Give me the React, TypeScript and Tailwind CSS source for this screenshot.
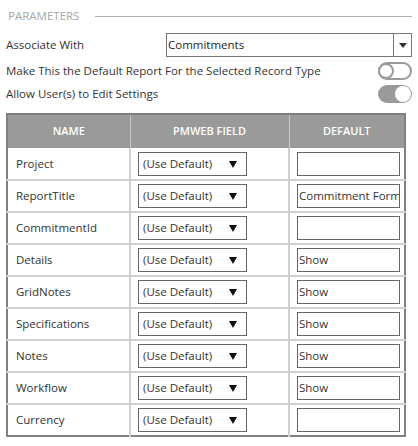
import React from "react";

const rows = [
  { name: "Project", value: "" },
  { name: "ReportTitle", value: "Commitment Form" },
  { name: "CommitmentId", value: "" },
  { name: "Details", value: "Show" },
  { name: "GridNotes", value: "Show" },
  { name: "Specifications", value: "Show" },
  { name: "Notes", value: "Show" },
  { name: "Workflow", value: "Show" },
  { name: "Currency", value: "" },
];

const Toggle = ({ on }: { on: boolean }) =>
  on ? (
    <div className="flex h-[18px] w-[34px] items-center justify-end rounded-full bg-[#9a9a9a] pr-[1px]">
      <div className="h-[16px] w-[16px] rounded-full bg-white" />
    </div>
  ) : (
    <div className="flex h-[18px] w-[34px] items-center rounded-full border-2 border-[#9a9a9a] bg-white">
      <div className="h-[16px] w-[16px] rounded-full border-2 border-[#9a9a9a] bg-white -ml-[2px]" />
    </div>
  );

export default function App() {
  return (
    <div className="h-[446px] w-[418px] bg-white font-['Open_Sans',sans-serif] text-[11.5px] text-[#333]">
      <div className="px-[6px] pt-[8px]">
        <div className="flex items-center gap-[16px] pl-[2px]">
          <span className="text-[11.5px] leading-[16px] text-[#a8a8a8]">PARAMETERS</span>
          <div className="mt-[1px] h-px flex-1 bg-[#b0b0b0]" />
        </div>

        <div className="mt-[9px] flex h-[24px] items-center">
          <span className="w-[160px]">Associate With</span>
          <div className="flex h-[24px] flex-1 items-center border border-[#777]">
            <span className="flex-1 pl-[1px] text-[#222]">Commitments</span>
            <div className="flex h-full w-[18px] items-center justify-center border-l border-[#777]">
              <svg width="8" height="5" viewBox="0 0 8 5">
                <path d="M0 0h8L4 5z" fill="#333" />
              </svg>
            </div>
          </div>
        </div>

        <div className="mt-[5px] flex h-[18px] items-center justify-between">
          <span>Make This the Default Report For the Selected Record Type</span>
          <Toggle on={false} />
        </div>
        <div className="mt-[5px] flex h-[18px] items-center justify-between">
          <span>Allow User(s) to Edit Settings</span>
          <Toggle on={true} />
        </div>

        <table className="mt-[10px] w-[400px] border-collapse border-2 border-[#808080]">
          <thead>
            <tr className="h-[34px] bg-[#9a9a9a] text-[11px] font-semibold text-white">
              <th className="w-[123px] border-r border-[#c8c8c8] font-semibold">NAME</th>
              <th className="w-[159px] border-r border-[#c8c8c8] font-semibold">PMWEB FIELD</th>
              <th className="font-semibold">DEFAULT</th>
            </tr>
          </thead>
          <tbody>
            {rows.map((r) => (
              <tr key={r.name} className="h-[32px] border-b-2 border-[#d0d0d0] last:border-b-0">
                <td className="border-r-2 border-[#d0d0d0] pl-[8px]">{r.name}</td>
                <td className="border-r-2 border-[#d0d0d0] pl-[7px]">
                  <div className="flex h-[24px] w-[109px] items-center justify-between border border-[#666] pl-[4px] pr-[9px]">
                    <span>(Use Default)</span>
                    <svg width="8" height="8" viewBox="0 0 8 8">
                      <path d="M0 1h8L4 8z" fill="#111" />
                    </svg>
                  </div>
                </td>
                <td className="pl-[7px]">
                  <div className="flex h-[24px] w-[103px] items-center overflow-hidden whitespace-nowrap border border-[#666] pl-[1px]">
                    {r.value}
                  </div>
                </td>
              </tr>
            ))}
          </tbody>
        </table>
      </div>
    </div>
  );
}
